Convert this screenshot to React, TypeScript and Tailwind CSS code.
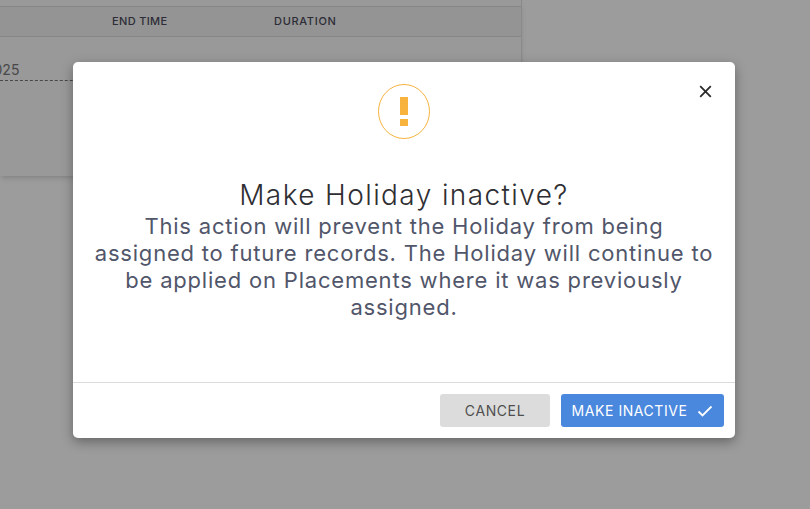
import React from "react";

export default function App() {
  return (
    <div className="relative h-[509px] w-[810px] overflow-hidden bg-white font-['Inter','Noto_Sans',sans-serif]">
      <div className="h-[176px] w-[522px] bg-[#fbfbfb] shadow-md border-r border-[#e2e2e2]">
        <div className="h-[7px] border-b border-[#dcdcdc]" />
        <div className="flex h-[30px] items-center border-b border-[#dcdcdc] bg-[#f2f2f2] text-[11px] font-medium text-[#4a4a5a]">
          <span className="ml-[112px] w-[162px] tracking-[0.35px]">END TIME</span>
          <span className="tracking-[0.7px]">DURATION</span>
        </div>
        <div className="relative h-[44px] overflow-hidden border-b border-dashed border-[#777]">
          <span className="absolute left-[-15px] bottom-0 text-[14px] text-[#777]">2025</span>
        </div>
      </div>
      <div className="absolute inset-0 flex items-start justify-center bg-black/[0.39] pr-[2px] pt-[62px]">
        <div className="flex h-[376px] w-[662px] flex-col rounded-[5px] bg-white shadow-[0_4px_12px_rgba(0,0,0,0.35)]">
          <div className="relative flex flex-1 flex-col items-center pt-[22px]">
            <svg width="54" height="57" viewBox="0 0 54 57" className="shrink-0">
              <ellipse cx="27" cy="27.5" rx="25.5" ry="27" fill="none" stroke="#f8b33f" strokeWidth="1" />
              <rect x="23" y="13" width="8" height="18" fill="#f8b33f" />
              <rect x="23" y="35" width="8" height="7" fill="#f8b33f" />
            </svg>
            <button className="absolute right-[23px] top-[23px] text-[#2b2b2b]">
              <svg width="13" height="13" viewBox="0 0 13 13" fill="none" stroke="currentColor" strokeWidth="1.8">
                <path d="M1.2 1.2 11.8 11.8M11.8 1.2 1.2 11.8" />
              </svg>
            </button>
            <h1 className="mt-[38px] text-center text-[28px] font-light leading-[32px] tracking-[1.4px] text-[#2f2f33]">Make Holiday inactive?</h1>
            <p className="mt-[2px] w-[640px] text-center text-[22px] leading-[27px] tracking-[0.8px] text-[#51566a]">
              This action will prevent the Holiday from being<br />
              assigned to future records. The Holiday will continue to<br />
              be applied on Placements where it was previously<br />
              assigned.
            </p>
          </div>
          <div className="flex h-[56px] items-start justify-end gap-[11px] border-t border-[#dcdcdc] pr-[11px] pt-[11px]">
            <button className="h-[33px] w-[110px] rounded-[3px] bg-[#dcdcdc] text-[14px] tracking-[0.6px] text-[#4f4f4f]">CANCEL</button>
            <button className="flex h-[33px] w-[163px] items-center justify-center gap-[10px] rounded-[3px] bg-[#4a88de] text-[14px] tracking-[0.55px] text-white">
              MAKE INACTIVE
              <svg width="16" height="12" viewBox="0 0 16 12" fill="none" stroke="currentColor" strokeWidth="1.8">
                <path d="M1.5 6.5 5.5 10.5 14.5 1.5" />
              </svg>
            </button>
          </div>
        </div>
      </div>
    </div>
  );
}
